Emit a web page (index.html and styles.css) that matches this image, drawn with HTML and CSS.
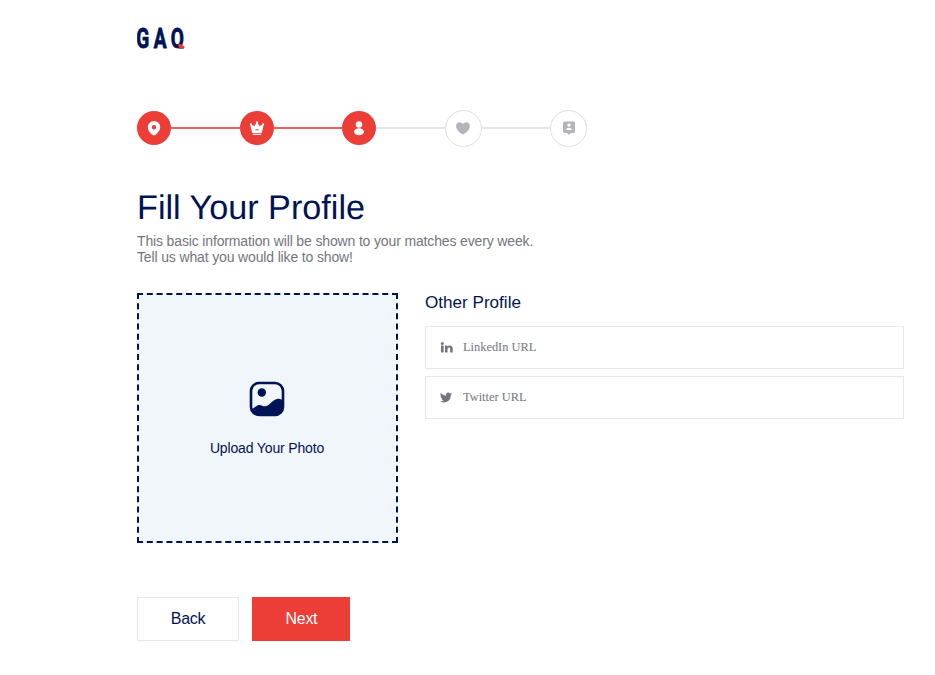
FILE: index.html
```html
<!DOCTYPE html>
<html lang="en">
<head>
<meta charset="utf-8">
<title>Fill Your Profile</title>
<link rel="stylesheet" href="styles.css">
</head>
<body>
<main class="page">
  <header>
    <svg class="logo" width="60" height="38" viewBox="0 0 60 38" aria-label="GAQ">
      <text class="logo-text" transform="translate(-.8 30) scale(.68 1)" x="0" y="0">GAQ</text>
      <path class="logo-mask" d="M37 30.600h12v6H37z"/>
      <path class="logo-tail" d="M41 26.500l3-.6 3.800 2.800-1.300 2.200-4.700-1.500z"/>
    </svg>
  </header>

  <ol class="steps">
    <li class="step done"><svg width="34" height="34" viewBox="0 0 34 34"><path fill-rule="evenodd" d="M17 10a6.200 6.200 0 0 1 6.200 6.200c0 3.300-2.700 6-4.700 7.600a2.400 2.400 0 0 1-3 0c-2-1.600-4.700-4.300-4.700-7.600A6.200 6.200 0 0 1 17 10zm0 4a2.200 2.200 0 1 0 0 4.400 2.200 2.200 0 0 0 0-4.400z"/></svg></li>
    <li class="line done"></li>
    <li class="step done"><svg width="34" height="34" viewBox="0 0 34 34"><path fill-rule="evenodd" d="M17 10.300a1.200 1.200 0 0 1 .8 2l1.900 2.900 2.500-1.600a1 1 0 1 1 1.400.6l-1.800 7.800h-9.600l-1.800-7.800a1 1 0 1 1 1.400-.6l2.500 1.600 1.900-2.900a1.200 1.200 0 0 1 .8-2zM15.300 18.200v1h3.400v-1zM12.800 22.800h8.400v1.200h-8.400z"/></svg></li>
    <li class="line done"></li>
    <li class="step done"><svg width="34" height="34" viewBox="0 0 34 34"><circle cx="17" cy="13.500" r="3.200"/><ellipse cx="17" cy="20.700" rx="5" ry="3.500"/></svg></li>
    <li class="line"></li>
    <li class="step"><svg width="34" height="34" viewBox="0 0 34 34"><path d="M17 23.500c-.7 0-6.900-4-6.900-8.500 0-2.100 1.600-3.700 3.500-3.700 1.400 0 2.600.7 3.400 1.800.8-1.100 2-1.800 3.400-1.800 1.900 0 3.500 1.600 3.500 3.700 0 4.500-6.200 8.500-6.900 8.500z"/></svg></li>
    <li class="line"></li>
    <li class="step"><svg width="34" height="34" viewBox="0 0 34 34"><path fill-rule="evenodd" d="M12.600 10.500h8.800a1.600 1.600 0 0 1 1.600 1.600v8.200a1.600 1.600 0 0 1-1.600 1.600h-2.400L17 24l-2-2.100h-2.400a1.600 1.600 0 0 1-1.600-1.600v-8.200a1.600 1.600 0 0 1 1.600-1.600zM17 12.400a1.700 1.700 0 1 0 0 3.400 1.700 1.700 0 0 0 0-3.400zM14 19.100h6c0-1.500-1.300-2.400-3-2.400s-3 .9-3 2.400z"/></svg></li>
  </ol>

  <h1>Fill Your Profile</h1>
  <p class="intro">This basic information will be shown to your matches every week.<br>Tell us what you would like to show!</p>

  <div class="columns">
    <div class="upload">
      <svg width="36" height="36" viewBox="0 0 36 36">
        <rect x="2" y="2" width="32" height="32" rx="8" fill="none" stroke="currentColor" stroke-width="2.600"/>
        <circle cx="12.800" cy="11.500" r="4.200" fill="currentColor"/>
        <path fill="currentColor" d="M2 28.500c3-1 4.800-3.800 7.600-4.500 3-.7 4.300 2 7.200 1.200 5-1.400 7-7 12-7.400 2.200-.2 3.500.7 5.200 1.400V27a7 7 0 0 1-7 7H9a7 7 0 0 1-7-5.500z"/>
      </svg>
      <span>Upload Your Photo</span>
    </div>
    <section class="other">
      <h2>Other Profile</h2>
      <label class="field">
        <svg width="13" height="14" viewBox="0 0 13 14"><circle cx="2.300" cy="2.400" r="1.500"/><path d="M1 4.600h2.600v7H1zM5 4.600h2.400v1c.5-.8 1.300-1.200 2.300-1.200 2.200 0 3 1.300 3 3.400v3.800h-2.500V8.300c0-1-.3-1.700-1.200-1.700-1 0-1.500.7-1.500 1.800v3.200H5z"/></svg>
        <input type="text" placeholder="LinkedIn URL">
      </label>
      <label class="field">
        <svg width="13" height="14" viewBox="0 0 26 26"><path d="M23.950 4.570a10 10 0 0 1-2.820.77 4.960 4.960 0 0 0 2.160-2.720c-.95.550-2 .95-3.130 1.180a4.920 4.920 0 0 0-8.380 4.480C7.690 8.090 4.070 6.130 1.640 3.160a4.920 4.920 0 0 0 1.520 6.570 4.900 4.900 0 0 1-2.230-.61v.06a4.920 4.920 0 0 0 3.950 4.830 5 5 0 0 1-2.210.08 4.940 4.940 0 0 0 4.600 3.420A9.870 9.870 0 0 1 0 19.540a13.990 13.990 0 0 0 7.550 2.210c9.050 0 14-7.500 14-13.980 0-.21 0-.42-.02-.63a9.940 9.940 0 0 0 2.420-2.570z"/></svg>
        <input type="text" placeholder="Twitter URL">
      </label>
    </section>
  </div>

  <div class="actions">
    <button type="button" class="back">Back</button>
    <button type="button" class="next">Next</button>
  </div>
</main>
</body>
</html>
```
FILE: styles.css
```css
* {
  box-sizing: border-box;
}

body {
  margin: 0;
  background: #fff;
  color: #001354;
  font-family: "Liberation Sans", Arial, sans-serif;
}

.page {
  padding: 18px 31px 0 137px;
}

.logo {
  display: block;
}

.logo-text {
  fill: #001354;
  stroke: #001354;
  stroke-width: .9px;
  font: bold 28px Roboto, sans-serif;
  letter-spacing: 6.600px;
}

.logo-mask {
  fill: #fff;
}

.logo-tail {
  fill: #ec3d37;
}

.steps {
  display: flex;
  align-items: center;
  width: 450px;
  height: 36px;
  margin: 54px 0 0;
  padding: 0;
  list-style: none;
}

.step {
  display: flex;
  align-items: center;
  justify-content: center;
  width: 37px;
  height: 37px;
  flex: none;
  border: 1.500px solid #dededf;
  border-radius: 50%;
  fill: #b4b5bc;
}

.step.done {
  width: 34px;
  height: 34px;
  border: 0;
  background: #ec3d37;
  fill: #fff;
}

.line {
  flex: 1;
  height: 2px;
  background: #e5e5e7;
}

.line.done {
  background: #ee5f5a;
}

h1 {
  margin: 42px 0 0;
  font-size: 34.200px;
  font-weight: 400;
  line-height: 40px;
  text-rendering: geometricPrecision;
}

.intro {
  margin: 5px 0 0;
  color: #74757f;
  font-size: 14px;
  letter-spacing: -.144px;
  line-height: 16px;
}

.columns {
  display: flex;
  gap: 27px;
  margin-top: 28px;
}

.upload {
  display: flex;
  flex-direction: column;
  align-items: center;
  width: 261px;
  height: 250px;
  padding: 86px 1px 0 0;
  border: 2px dashed #001354;
  background: #f1f6fa;
  font-size: 14px;
  letter-spacing: -.15px;
}

.upload span {
  margin-top: 23px;
  line-height: 16px;
}

.other {
  flex: 1;
}

h2 {
  margin: 0 0 13px;
  font-size: 17.100px;
  font-weight: 400;
  line-height: 20px;
}

.field {
  display: flex;
  align-items: center;
  gap: 10px;
  height: 43px;
  margin-bottom: 7px;
  padding: 0 14px;
  border: 1px solid #e8e8ea;
  fill: #74757f;
}

.field input {
  flex: 1;
  padding: 0;
  border: 0;
  outline: 0;
  background: none;
  font: 12.400px "Liberation Serif", "Times New Roman", serif;
}

.field input::placeholder {
  color: #74757f;
}

.actions {
  display: flex;
  gap: 13.400px;
  margin-top: 54px;
}

.actions button {
  height: 44px;
  padding: 0;
  border: 0;
  font-family: inherit;
  font-size: 16px;
  letter-spacing: -.3px;
}

.actions .back {
  width: 102px;
  border: 1px solid #e8e8ea;
  background: #fff;
  color: #001354;
}

.actions .next {
  width: 98px;
  background: #ec3d37;
  color: #fff;
}
```
